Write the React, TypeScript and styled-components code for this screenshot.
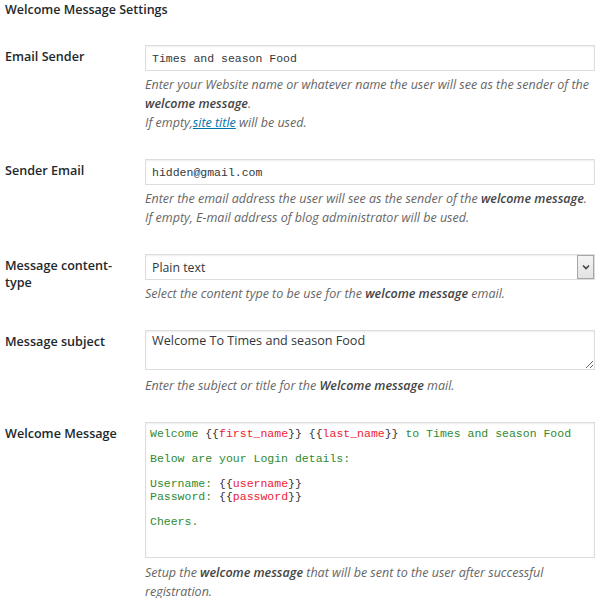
import React from "react";
import styled, { createGlobalStyle } from "styled-components";

const GlobalStyle = createGlobalStyle`
  html, body { margin: 0; padding: 0; background: #fff; }
  body { font-family: "Open Sans", "Liberation Sans", sans-serif; color: #444; }
  * { box-sizing: border-box; }
`;

const Page = styled.div`
  padding: 1px 5px 0 5px;
  width: 600px;
`;

const Title = styled.h3`
  margin: 0 0 12px 0;
  font-size: 12.5px;
  line-height: 18px;
  font-weight: 600;
  color: #23282d;
`;

const Row = styled.div`
  display: grid;
  grid-template-columns: 140px 1fr;
  padding: 14px 0 13px 0;
`;

const Label = styled.label`
  padding: 3px 20px 0 0;
  font-size: 12.6px;
  line-height: 17px;
  font-weight: 600;
  color: #23282d;
`;

const Field = styled.div`
  display: flex;
  flex-direction: column;
  min-width: 0;
`;

const TextInput = styled.input<{ $mono?: boolean }>`
  display: block;
  width: 100%;
  height: 26px;
  margin: 0;
  padding: 0 6px;
  border: 1px solid #ddd;
  box-shadow: inset 0 1px 2px rgba(0, 0, 0, 0.07);
  background: #fff;
  color: #32373c;
  font-family: ${(p) =>
    p.$mono ? '"Liberation Mono", "DejaVu Sans Mono", monospace' : '"Open Sans", sans-serif'};
  font-size: ${(p) => (p.$mono ? "11.5px" : "12.5px")};
  outline: none;
`;

const SelectWrap = styled.div`
  position: relative;
  height: 26px;
`;

const Select = styled.select`
  display: block;
  width: 100%;
  height: 26px;
  margin: 0;
  padding: 0 24px 0 6px;
  border: 1px solid #ddd;
  box-shadow: inset 0 1px 2px rgba(0, 0, 0, 0.07);
  background: #fff;
  color: #32373c;
  font-family: "Open Sans", sans-serif;
  font-size: 12.3px;
  appearance: none;
  -webkit-appearance: none;
  border-radius: 0;
  outline: none;
`;

const ArrowBox = styled.span`
  position: absolute;
  top: 1px;
  right: 1px;
  width: 17px;
  height: 24px;
  border: 1px solid #a6a6a6;
  background: linear-gradient(#f4f4f4, #e3e3e3);
  display: flex;
  align-items: center;
  justify-content: center;
  pointer-events: none;
`;

const SubjectArea = styled.textarea`
  display: block;
  width: 100%;
  height: 40px;
  margin: 0;
  padding: 2px 6px;
  border: 1px solid #ddd;
  box-shadow: inset 0 1px 2px rgba(0, 0, 0, 0.07);
  background: #fff;
  color: #32373c;
  font-family: "Open Sans", sans-serif;
  font-size: 12.6px;
  line-height: 16px;
  resize: vertical;
  outline: none;
`;

const CodeBox = styled.div`
  height: 136px;
  padding: 5px 4px;
  border: 1px solid #ddd;
  box-shadow: inset 0 1px 2px rgba(0, 0, 0, 0.07);
  background: #fff;
  font-family: "Liberation Mono", "DejaVu Sans Mono", monospace;
  font-size: 11.5px;
  line-height: 12.5px;
  white-space: pre;
  color: #2f8a2f;
  overflow: hidden;
`;

const Brace = styled.span`
  color: #333;
`;

const Token = styled.span`
  color: #ee2233;
`;

const Description = styled.p<{ $gap?: number }>`
  margin: ${(p) => p.$gap ?? 4}px 0 0 0;
  font-size: 12.5px;
  line-height: 19px;
  font-style: italic;
  color: #666;
`;

const Strong = styled.b`
  font-weight: 600;
  color: #444;
`;

const Link = styled.a`
  color: #0073aa;
  text-decoration: underline;
`;

const Tag = ({ name }: { name: string }) => (
  <>
    <Brace>{"{{"}</Brace>
    <Token>{name}</Token>
    <Brace>{"}}"}</Brace>
  </>
);

export default function App() {
  return (
    <>
      <GlobalStyle />
      <Page>
        <Title>Welcome Message Settings</Title>

        <Row>
          <Label>Email Sender</Label>
          <Field>
            <TextInput $mono defaultValue="Times and season Food" />
            <Description>
              Enter your Website name or whatever name the user will see as the sender of the{" "}
              <Strong>welcome message</Strong>.
              <br />
              If empty,<Link href="#">site title</Link> will be used.
            </Description>
          </Field>
        </Row>

        <Row>
          <Label>Sender Email</Label>
          <Field>
            <TextInput $mono defaultValue="hidden@gmail.com" />
            <Description>
              Enter the email address the user will see as the sender of the{" "}
              <Strong>welcome message</Strong>.
              <br />
              If empty, E-mail address of blog administrator will be used.
            </Description>
          </Field>
        </Row>

        <Row>
          <Label>Message content-type</Label>
          <Field>
            <SelectWrap>
              <Select defaultValue="plain">
                <option value="plain">Plain text</option>
                <option value="html">HTML</option>
              </Select>
              <ArrowBox>
                <svg width="8" height="6" viewBox="0 0 8 6">
                  <path d="M1 1.5 L4 4.5 L7 1.5" fill="none" stroke="#444" strokeWidth="1.6" />
                </svg>
              </ArrowBox>
            </SelectWrap>
            <Description>
              Select the content type to be use for the <Strong>welcome message</Strong> email.
            </Description>
          </Field>
        </Row>

        <Row>
          <Label>Message subject</Label>
          <Field>
            <SubjectArea defaultValue="Welcome To Times and season Food" />
            <Description $gap={6}>
              Enter the subject or title for the <Strong>Welcome message</Strong> mail.
            </Description>
          </Field>
        </Row>

        <Row>
          <Label>Welcome Message</Label>
          <Field>
            <CodeBox>
              {"Welcome "}
              <Tag name="first_name" />
              {" "}
              <Tag name="last_name" />
              {" to Times and season Food\n\nBelow are your Login details:\n\n"}
              {"Username: "}
              <Tag name="username" />
              {"\nPassword: "}
              <Tag name="password" />
              {"\n\nCheers."}
            </CodeBox>
            <Description $gap={5}>
              Setup the <Strong>welcome message</Strong> that will be sent to the user after successful
              registration.
            </Description>
          </Field>
        </Row>
      </Page>
    </>
  );
}
